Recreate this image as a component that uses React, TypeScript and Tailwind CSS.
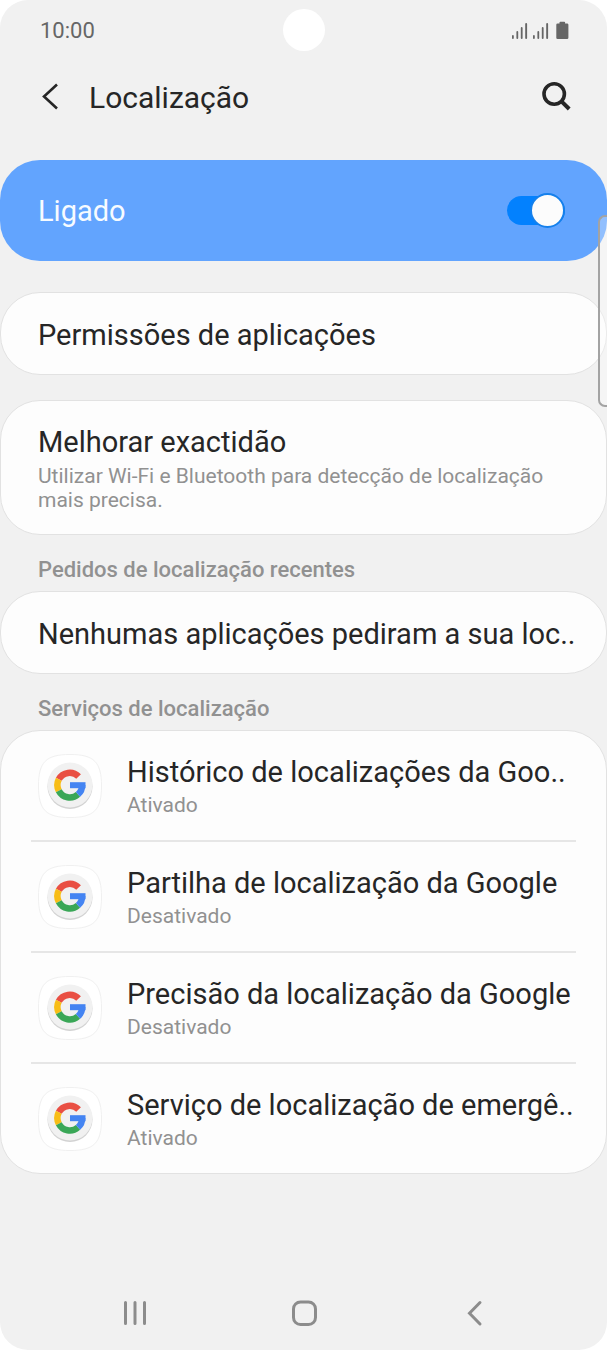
import { useState } from 'react'

const SERVICES = [
  { name: 'Histórico de localizações da Goo..', state: 'Ativado' },
  { name: 'Partilha de localização da Google', state: 'Desativado' },
  { name: 'Precisão da localização da Google', state: 'Desativado' },
  { name: 'Serviço de localização de emergê..', state: 'Ativado' },
]

export default function App() {
  return (
    <div className="bg-white">
      <div className="relative flex min-h-screen flex-col overflow-hidden rounded-[28px] bg-[#f1f1f1] font-[Roboto,sans-serif] text-[#262626]">
        <StatusBar />
        <Header />

        <main>
          <LocationSwitch />

          <Card className="mt-[31px]">
            <button type="button" className="block w-full pt-[23px] pr-6 pb-5 pl-[37px] text-left">
              <Title>Permissões de aplicações</Title>
            </button>
          </Card>

          <Card className="mt-[25px]">
            <button type="button" className="block w-full px-[37px] pt-[22px] pb-[22px] text-left">
              <Title>Melhorar exactidão</Title>
              <span className="mt-[3px] block text-[21px] leading-6 text-[#919191]">
                Utilizar Wi-Fi e Bluetooth para detecção de localização mais precisa.
              </span>
            </button>
          </Card>

          <SectionHeading>Pedidos de localização recentes</SectionHeading>
          <Card>
            <p className="pt-[23px] pr-6 pb-5 pl-[37px]">
              <Title>Nenhumas aplicações pediram a sua loc..</Title>
            </p>
          </Card>

          <SectionHeading>Serviços de localização</SectionHeading>
          <Card>
            <ul className="px-[30px]">
              {SERVICES.map((s) => (
                <li key={s.name} className="border-b-2 border-[#e6e6e6] last:border-b-0">
                  <button type="button" className="flex h-[109px] w-full items-center gap-[25px] pl-[7px] text-left">
                    <GoogleIcon />
                    <span className="min-w-0">
                      <Title>{s.name}</Title>
                      <span className="block text-[21px] leading-7 text-[#919191]">{s.state}</span>
                    </span>
                  </button>
                </li>
              ))}
            </ul>
          </Card>
        </main>

        <NavBar />

        {/* edge panel handle, floats over the cards */}
        <div className="absolute top-[215px] right-0 h-[192px] w-[9px] rounded-l-[7px] border-2 border-r-0 border-[#a3a3a3] bg-white/30" />
      </div>
    </div>
  )
}

function StatusBar() {
  return (
    <div className="relative flex h-[62px] items-center justify-between pr-[38px] pl-10 text-[#666]">
      <span className="text-[22px] leading-6">10:00</span>
      <span className="absolute top-[9px] left-1/2 size-[42px] -translate-x-1/2 rounded-full bg-white" />
      <svg width="58" height="20" viewBox="0 0 58 20" fill="#666" aria-hidden="true">
        <SignalBars x={1} />
        <SignalBars x={22} />
        <path d="M48.5 1.5a.8.8 0 0 1 .8-.8h4a.8.8 0 0 1 .8.8v1h2a1.3 1.3 0 0 1 1.3 1.3v13a1.3 1.3 0 0 1-1.3 1.3h-9.5a1.3 1.3 0 0 1-1.3-1.3v-13a1.3 1.3 0 0 1 1.3-1.3h1.9z" />
      </svg>
    </div>
  )
}

function SignalBars({ x }: { x: number }) {
  return (
    <g>
      <rect x={x} y="14" width="1.8" height="4" rx=".9" />
      <rect x={x + 4.4} y="10" width="1.8" height="8" rx=".9" />
      <rect x={x + 8.8} y="6" width="1.8" height="12" rx=".9" />
      <rect x={x + 13.2} y="2" width="1.9" height="16" rx=".9" />
    </g>
  )
}

function Header() {
  return (
    <header className="flex h-[98px] items-start pt-[17px] pr-9 pl-10">
      <button type="button" aria-label="Voltar" className="mt-[3px]">
        <svg width="20" height="28" viewBox="0 0 20 28" fill="none" stroke="#262626" strokeWidth="2.6">
          <path d="M17 2.5 4 14.5l13 12" />
        </svg>
      </button>
      <h1 className="ml-[29px] text-[30px] leading-[38px]">Localização</h1>
      <button type="button" aria-label="Pesquisar" className="mt-[2px] ml-auto">
        <svg width="30" height="30" viewBox="0 0 30 30" fill="none" stroke="#262626" strokeWidth="3.6">
          <circle cx="13.2" cy="13" r="10.2" />
          <path d="m20.5 20.3 7.7 7.7" strokeWidth="4" />
        </svg>
      </button>
    </header>
  )
}

function LocationSwitch() {
  const [on, setOn] = useState(true)

  return (
    <label className="flex h-[101px] items-center justify-between rounded-[40px] bg-[#62a4fe] pr-[42px] pl-[38px]">
      <span className="text-[29px] leading-[38px] text-[#f7fbff]">Ligado</span>
      <input
        type="checkbox"
        role="switch"
        checked={on}
        onChange={(e) => setOn(e.target.checked)}
        className="relative h-[29px] w-[58px] appearance-none rounded-full bg-[#8a8a8a] before:absolute before:-top-[3px] before:left-0 before:size-[35px] before:rounded-full before:border-2 before:border-[#8a8a8a] before:bg-[#fcfcfc] checked:bg-[#0381fe] checked:before:left-[23px] checked:before:border-[#1580ec]"
      />
    </label>
  )
}

function Card({ className = '', children }: { className?: string; children: React.ReactNode }) {
  return (
    <section className={`rounded-[40px] border border-[#e2e2e2] bg-[#fdfdfd] ${className}`}>
      {children}
    </section>
  )
}

function Title({ children }: { children: React.ReactNode }) {
  return <span className="block truncate text-[29px] leading-[38px]">{children}</span>
}

function SectionHeading({ children }: { children: React.ReactNode }) {
  return (
    <h2 className="px-[38px] pt-[21px] pb-[7px] text-[22px] leading-7 font-medium text-[#919191]">{children}</h2>
  )
}

function GoogleIcon() {
  return (
    <svg width="64" height="64" viewBox="0 0 64 64" className="shrink-0" aria-hidden="true">
      <path
        d="M32 .5C56 .5 63.5 8 63.5 32S56 63.5 32 63.5.5 56 .5 32 8 .5 32 .5z"
        fill="#fff"
        stroke="#f0f0f0"
      />
      <circle cx="32" cy="32.5" r="22.5" fill="#d2d2d2" />
      <circle cx="32" cy="31" r="22.5" fill="#f1f1f1" />
      <g fill="none" strokeWidth="6.5">
        <path d="M20.8 25.3a12.4 12.4 0 0 1 19.8-2.7" stroke="#e94f43" />
        <path d="M20.8 36.7a12.4 12.4 0 0 1 0-11.4" stroke="#f8bd16" />
        <path d="M40 40.4a12.4 12.4 0 0 1-19.2-3.7" stroke="#3aa757" />
        <path d="M44.2 31a12.4 12.4 0 0 1-4.2 9.4" stroke="#4484f2" />
        <path d="M32 31.2h15.5" strokeWidth="6" stroke="#4484f2" />
      </g>
    </svg>
  )
}

function NavBar() {
  return (
    <nav className="mt-auto flex h-[74px] items-center justify-around px-[50px] text-[#8c8c8c]">
      <button type="button" aria-label="Recentes">
        <svg width="28" height="30" viewBox="0 0 28 30" stroke="currentColor" strokeWidth="3" strokeLinecap="round">
          <path d="M4.5 4.5v21M14 4.5v21M23.5 4.5v21" />
        </svg>
      </button>
      <button type="button" aria-label="Início">
        <svg width="28" height="30" viewBox="0 0 28 30" fill="none" stroke="currentColor" strokeWidth="3">
          <rect x="3.5" y="4" width="22" height="22.5" rx="7" />
        </svg>
      </button>
      <button type="button" aria-label="Voltar">
        <svg width="28" height="30" viewBox="0 0 28 30" fill="none" stroke="currentColor" strokeWidth="3" strokeLinecap="round">
          <path d="M21 4.5 10.5 15.2 21 26" />
        </svg>
      </button>
    </nav>
  )
}
